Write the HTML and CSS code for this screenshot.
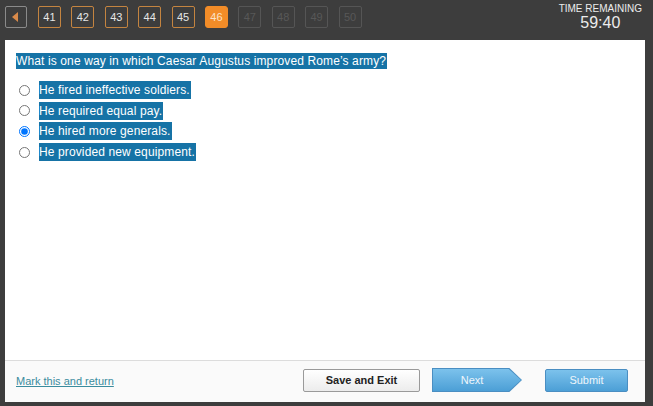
FILE: index.html
```html
<!DOCTYPE html>
<html lang="en">
<head>
  <meta charset="UTF-8" />
  <title>Question 46</title>
  <link rel="stylesheet" href="styles.css">
</head>
<body>
  <!-- Barra superior: navegación de preguntas y tiempo -->
  <header class="topbar">
    <nav class="pager">
      <button class="pg pg-back"><span class="tri"></span></button>
      <button class="pg">41</button>
      <button class="pg">42</button>
      <button class="pg">43</button>
      <button class="pg">44</button>
      <button class="pg">45</button>
      <button class="pg current">46</button>
      <button class="pg off">47</button>
      <button class="pg off">48</button>
      <button class="pg off">49</button>
      <button class="pg off">50</button>
    </nav>
    <div class="timer">
      <div class="timer-label">TIME REMAINING</div>
      <div class="timer-value">59:40</div>
    </div>
  </header>

  <!-- Panel de la pregunta -->
  <main class="panel">
    <div class="question">
      <p class="prompt"><span class="hl">What is one way in which Caesar Augustus improved Rome’s army?</span></p>
      <ul class="answers">
        <li><input type="radio" name="q46"><span class="hl">He fired ineffective soldiers.</span></li>
        <li><input type="radio" name="q46"><span class="hl">He required equal pay.</span></li>
        <li><input type="radio" name="q46" checked><span class="hl">He hired more generals.</span></li>
        <li><input type="radio" name="q46"><span class="hl">He provided new equipment.</span></li>
      </ul>
    </div>

    <footer class="actions">
      <a href="#" class="mark">Mark this and return</a>
      <div class="btns">
        <button class="btn btn-save">Save and Exit</button>
        <button class="btn-next"><span>Next</span></button>
        <button class="btn btn-submit">Submit</button>
      </div>
    </footer>
  </main>
</body>
</html>
```

FILE: styles.css
```css
/* ======= GENERAL ======= */
body {
  margin: 0;
  background: #3d3d3d;
  font-family: 'Liberation Sans', Arial, sans-serif;
  height: 406px;
  overflow: hidden;
}

/* ======= TOP BAR ======= */
.topbar {
  height: 40px;
  display: flex;
  justify-content: space-between;
  padding: 0 11px 0 5px;
}
.pager {
  display: flex;
  gap: 10.4px;
  padding-top: 6px;
}
.pg {
  width: 23px;
  height: 22px;
  padding: 0;
  background: transparent;
  border: 1px solid #c48440;
  border-radius: 2px;
  color: #e6e6e6;
  font-family: inherit;
  font-size: 11px;
}
.pg-back {
  width: 22px;
  border-color: #8a8a8a;
  margin-right: 0.6px;
  display: flex;
  align-items: center;
  justify-content: center;
}
.pg-back .tri {
  width: 0;
  height: 0;
  border-top: 5px solid transparent;
  border-bottom: 5px solid transparent;
  border-right: 6px solid #d98a4a;
  margin-left: -2px;
}
.pg.current {
  background: #f28c28;
  border-color: #f28c28;
  border-radius: 3px;
  color: #fbe3c8;
}
.pg.off {
  border-color: #555;
  color: #585858;
}

.timer {
  text-align: center;
  color: #ececec;
  padding-top: 3px;
}
.timer-label {
  font-size: 10px;
  line-height: 11px;
}
.timer-value {
  font-size: 16px;
  line-height: 18px;
}

/* ======= PANEL ======= */
.panel {
  margin: 0 8px 0 5px;
  height: 362px;
  background: #fff;
  display: flex;
  flex-direction: column;
}
.question {
  flex: 1;
  padding: 13px 11px 0;
  font-size: 12px;
  letter-spacing: 0.12px;
  color: #fff;
}
.hl {
  background: #1673a6;
  padding: 1px 1px 1px 0;
  line-height: 16px;
}
.prompt {
  margin: 0 0 11px;
  line-height: 16px;
}
.answers {
  list-style: none;
  margin: 0;
  padding: 0;
}
.answers li {
  display: flex;
  align-items: center;
  height: 20.6px;
}
.answers input {
  margin: 0 9px 0 3px;
  width: 11px;
  height: 11px;
}

/* ======= FOOTER ======= */
.actions {
  height: 42px;
  border-top: 1px solid #dcdcdc;
  background: #fafafa;
  display: flex;
  align-items: flex-start;
  justify-content: space-between;
  padding: 7px 17px 0 11px;
  box-sizing: border-box;
}
.mark {
  color: #3a8c9e;
  font-size: 11px;
  margin-top: 7px;
}
.btns {
  display: flex;
  align-items: center;
}
.btn {
  height: 23px;
  border-radius: 2px;
  font-family: inherit;
  font-size: 11px;
  padding: 0;
}
.btn-save {
  width: 117px;
  background: linear-gradient(#ffffff, #ececec);
  border: 1px solid #9a9a9a;
  color: #222;
  font-weight: 700;
}
.btn-next {
  width: 90px;
  height: 24px;
  margin: 0 23px 0 12px;
  padding: 1px;
  border: none;
  background: #4a8ec2;
  clip-path: polygon(0 0, 86% 0, 100% 50%, 86% 100%, 0 100%);
}
.btn-next span {
  display: flex;
  align-items: center;
  justify-content: center;
  height: 100%;
  padding-right: 10px;
  background: linear-gradient(#7cc2ec, #4c9fd6);
  clip-path: polygon(0 0, 86% 0, 100% 50%, 86% 100%, 0 100%);
  color: #eef6fb;
  font-family: 'Liberation Sans', Arial, sans-serif;
  font-size: 11px;
}
.btn-submit {
  width: 83px;
  background: linear-gradient(#7cc2ec, #4c9fd6);
  border: 1px solid #4a8ec2;
  color: #eef6fb;
}
```
